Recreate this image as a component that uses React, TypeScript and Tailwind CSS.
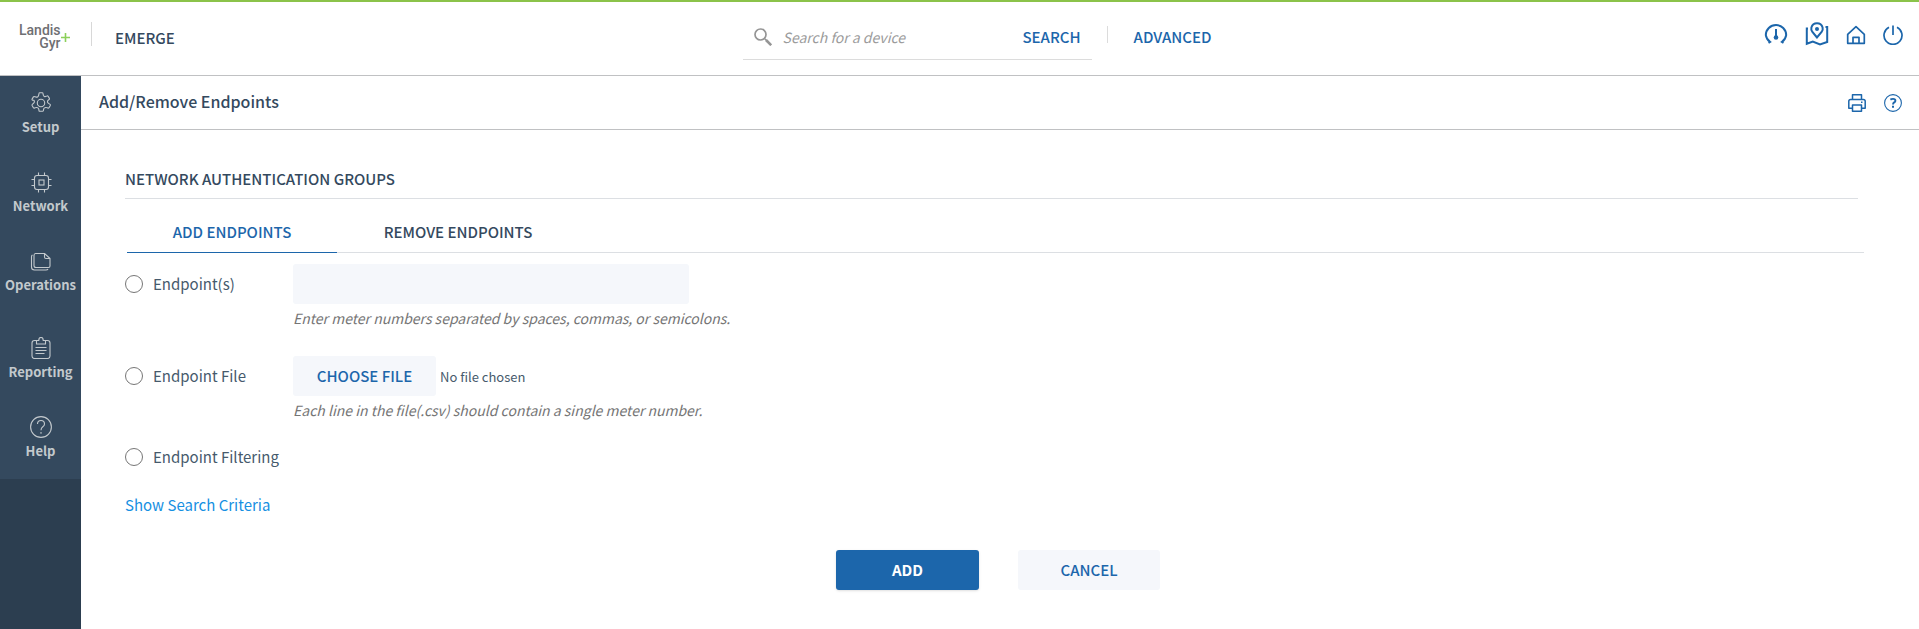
import { useState, type ReactNode } from "react";

type IconProps = { className?: string };

function GearIcon() {
  return (
    <svg viewBox="0 0 22 22" className="size-[22px]" fill="none" stroke="currentColor" strokeWidth="1.1" strokeLinejoin="round" aria-hidden="true">
      <path d="M8.7 3.2 9 1.4Q9.1.7 9.8.7h2.4q.7 0 .8.7l.3 1.800q.2.9 1.100 1.200.8.400 1.600-.100l1-.400q.7-.300 1.100.300l1.300 2.200q.3.600-.2 1l-1 .8q-.7.600-.7 1.400 0 1 .7 1.500l1.900 1.300q.5.400.2 1l-1.300 2.300q-.4.600-1.100.400l-1.500-.500q-.8-.3-1.600.1-.9.400-1.100 1.200l-.3 1.700q-.2.700-.8.700H9.800q-.7 0-.8-.700l-.3-1.700q-.2-.8-1.100-1.200-.8-.400-1.600-.1l-1.500.5q-.7.200-1.100-.400l-1.300-2.300q-.3-.600.2-1l1.400-1.300q.7-.5.700-1.500 0-.800-.7-1.400L2.300 8.100q-.5-.400-.2-1l1.300-2.200q.4-.600 1.100-.3l1.500.400q.8.300 1.600-.100.9-.400 1.100-1.700Z" />
      <circle cx="11" cy="11" r="3.700" />
    </svg>
  );
}

function ChipIcon() {
  return (
    <svg viewBox="0 0 22 22" className="size-[22px]" fill="none" stroke="currentColor" strokeWidth="1.1" aria-hidden="true">
      <rect x="4.500" y="4.500" width="14" height="14" rx="2.500" />
      <rect x="9" y="9" width="5" height="5" />
      <path d="M8.500 4.500v-3M14.500 4.500v-3M8.500 21.500v-3M14.500 21.500v-3M4.500 8.500h-3M4.500 14.500h-3M21.500 8.500h-3M21.500 14.500h-3" />
    </svg>
  );
}

function PagesIcon() {
  return (
    <svg viewBox="0 0 22 22" className="size-[22px]" fill="none" stroke="currentColor" strokeWidth="1.1" strokeLinejoin="round" aria-hidden="true">
      <path d="M5.500 3.500h9l5.500 5v7.500q0 1.500-1.500 1.500h-12.500q-2 0-2-2v-10q0-2 1.500-2ZM14.500 3.500v3.500q0 1.500 1.500 1.500h4" />
      <path d="M2.500 5q-1 .4-1 1.800v10.200q0 3 3 3h11.500q1.500 0 2-1" />
    </svg>
  );
}

function ClipboardIcon() {
  return (
    <svg viewBox="0 0 22 22" className="size-[22px]" fill="none" stroke="currentColor" strokeWidth="1.1" strokeLinejoin="round" aria-hidden="true">
      <path d="M7 3.500H4.500q-2.500 0-2.500 2.500v13q0 2.500 2.500 2.500h13q2.500 0 2.500-2.500V6q0-2.500-2.500-2.500H15" />
      <path d="M6.500 7V3.500h2.300q0-3 2.200-3t2.200 3h2.300V7Z" />
      <path d="M5.500 10.500h11M5.500 13.500h11M5.500 16.500h9" />
    </svg>
  );
}

function HelpIcon() {
  return (
    <svg viewBox="0 0 22 22" className="size-[22px]" fill="none" stroke="currentColor" strokeWidth="1.1" aria-hidden="true">
      <circle cx="11" cy="11" r="10.400" />
      <path d="M7.500 8q0-3.500 3.500-3.500T14.500 8q0 1.500-1.700 2.700Q11 12 11 14.200M11 15.900v1.800" />
    </svg>
  );
}

function GaugeIcon({ className }: IconProps) {
  return (
    <svg viewBox="0 0 24 20" className={className} fill="none" stroke="currentColor" strokeWidth="2" aria-hidden="true">
      <path d="M4.500 18.800 6 17.900A10.200 10.200 0 0 1 1.800 11.200 10.200 10.200 0 0 1 22.200 11.200 10.200 10.200 0 0 1 18 17.900l1.500.9" />
      <path d="M12 5v8" />
      <circle cx="12" cy="13.500" r="2.300" fill="currentColor" stroke="none" />
    </svg>
  );
}

function MapIcon({ className }: IconProps) {
  return (
    <svg viewBox="0 0 24 24" className={className} fill="none" stroke="currentColor" strokeWidth="2" aria-hidden="true">
      <path d="M3 6.500H1.800V21.800l6-2.300 7.200 3 7.200-2.500V5H20.500" />
      <path d="M12 15.500 7.400 10Q5.800 7.800 6.400 5.400 7.600 1.200 12 1.200t5.600 4.200q.6 2.400-1 4.600Z" />
      <circle cx="12" cy="7" r="2" fill="currentColor" stroke="none" />
    </svg>
  );
}

function HomeIcon({ className }: IconProps) {
  return (
    <svg viewBox="0 0 20 20" className={className} fill="none" stroke="currentColor" strokeWidth="1.700" strokeLinejoin="round" aria-hidden="true">
      <path d="M1.700 9.300 10 1.700l8.300 7.600v9H1.700Z" />
      <path d="M7 18.300v-6h6v6" />
    </svg>
  );
}

function PowerIcon({ className }: IconProps) {
  return (
    <svg viewBox="0 0 20 20" className={className} fill="none" stroke="currentColor" strokeWidth="1.700" aria-hidden="true">
      <path d="M6 2.300A9 9 0 1 0 14 2.300M10 .5v9.500" />
    </svg>
  );
}

function PrinterIcon({ className }: IconProps) {
  return (
    <svg viewBox="0 0 18 18" className={className} fill="none" stroke="currentColor" strokeWidth="1.500" strokeLinejoin="round" aria-hidden="true">
      <path d="M4.500 5.500V.8h9v4.700M4.500 14.300H.8v-7q0-1.800 1.800-1.800h12.800q1.800 0 1.800 1.800v7h-3.700" />
      <path d="M4.500 11h9v6.200h-9ZM13 8.200h1.500" />
    </svg>
  );
}

function HelpBlueIcon({ className }: IconProps) {
  return (
    <svg viewBox="0 0 18 18" className={className} fill="none" stroke="currentColor" aria-hidden="true">
      <circle cx="9" cy="9" r="8.400" strokeWidth="1.100" />
      <path d="M6.400 5.600Q7.400 4.900 9 4.900q2.400 0 2.400 1.800 0 1-1.200 1.700Q9 9.200 9 10.600" strokeWidth="1.900" />
      <path d="M9 11.800v2" strokeWidth="2" />
    </svg>
  );
}

function SearchIcon() {
  return (
    <svg viewBox="0 0 18 18" className="size-[18px] shrink-0 text-[#959595]" fill="none" stroke="currentColor" aria-hidden="true">
      <circle cx="6.500" cy="6.500" r="5.500" strokeWidth="1.700" />
      <path d="m10.500 10.500 1.800 1.800" strokeWidth="1.500" />
      <path d="m12 12 5.200 5.200" strokeWidth="2.600" />
    </svg>
  );
}

function Logo() {
  return (
    <a href="#" aria-label="Landis+Gyr" className="flex w-[51px] items-center font-['Roboto',sans-serif] text-sm leading-[13px] font-medium text-[#6f7073]">
      <span className="flex flex-col items-end">
        <span>Landis</span>
        <span>Gyr</span>
      </span>
      <svg viewBox="0 0 9 9" className="size-[9px] shrink-0 text-[#8cd05a]" stroke="currentColor" strokeWidth="1.600" aria-hidden="true">
        <path d="M4.500 0v9M0 4.500h9" />
      </svg>
    </a>
  );
}

function NavItem({ icon, label, className = "" }: { icon: ReactNode; label: string; className?: string }) {
  return (
    <a href="#" className={`flex h-[79px] flex-col items-center gap-[5px] pt-4 text-[#c3c9cd] ${className}`}>
      {icon}
      <span className="text-[13px] leading-4 font-bold">{label}</span>
    </a>
  );
}

type Choice = "endpoints" | "file" | "filtering";

function RadioOption({ id, label, checked, onSelect }: { id: Choice; label: string; checked: boolean; onSelect: (id: Choice) => void }) {
  return (
    <div className="flex h-10 w-[168px] shrink-0 items-center gap-[10px]">
      <input
        type="radio"
        id={id}
        name="source"
        checked={checked}
        onChange={() => onSelect(id)}
        className="size-[18px] shrink-0 appearance-none rounded-full border border-[#767676] bg-white checked:border-[5px] checked:border-[#1c66ab]"
      />
      <label htmlFor={id} className="whitespace-nowrap">{label}</label>
    </div>
  );
}

export default function App() {
  const [choice, setChoice] = useState<Choice | null>(null);
  const [tab, setTab] = useState<"add" | "remove">("add");
  const tabBase = "-mb-px h-[38px] w-[210px] border-b pb-1 font-medium";

  return (
    <div className="flex min-h-screen flex-col bg-white font-['Noto_Sans_CJK_SC',sans-serif] text-[15px] leading-5 text-[#465a6c]">
      <header className="grid h-[76px] grid-cols-[1fr_auto_1fr] border-t-2 border-b border-t-[#8bc34a] border-b-[#c0c1c3]">
        <div className="flex items-start pt-5 pl-[19px]">
          <div className="pt-[2px]"><Logo /></div>
          <div className="ml-[21px] h-6 w-px bg-[#d8d8d8]" />
          <span className="ml-[23px] pt-[6px] font-medium text-[#34495e]">EMERGE</span>
        </div>
        <div className="flex items-start pl-[35px] font-medium text-[#1c66ab]">
          <form className="flex h-[58px] w-[349px] items-center gap-[11px] border-b border-[#dcdcdc] px-[11px] pt-4 pb-1" onSubmit={(e) => e.preventDefault()}>
            <SearchIcon />
            <input type="search" aria-label="Search for a device" placeholder="Search for a device" className="min-w-0 flex-1 text-sm font-normal text-[#555] italic outline-none placeholder:text-[#9b9b9b]" />
            <button type="submit">SEARCH</button>
          </form>
          <div className="mt-6 ml-[15px] h-[17px] w-px bg-[#dcdcdc]" />
          <a href="#" className="mt-[25px] ml-[26px]">ADVANCED</a>
        </div>
        <nav aria-label="Shortcuts" className="flex items-start justify-end gap-[17px] pt-5 pr-4 text-[#1c66ab]">
          <a href="#" aria-label="Dashboard" className="pt-[2px]"><GaugeIcon className="h-5 w-6" /></a>
          <a href="#" aria-label="Map"><MapIcon className="size-6" /></a>
          <a href="#" aria-label="Home" className="pt-[3px]"><HomeIcon className="size-5" /></a>
          <a href="#" aria-label="Log out" className="pt-[3px]"><PowerIcon className="size-5" /></a>
        </nav>
      </header>

      <div className="flex flex-1">
        <nav aria-label="Main" className="w-[81px] shrink-0 bg-[#2c3e50]">
          <div className="bg-[#34495e]">
            <NavItem icon={<GearIcon />} label="Setup" />
            <NavItem icon={<ChipIcon />} label="Network" />
            <NavItem icon={<PagesIcon />} label="Operations" />
            <NavItem icon={<ClipboardIcon />} label="Reporting" className="mt-2" />
            <NavItem icon={<HelpIcon />} label="Help" />
          </div>
        </nav>

        <main className="min-w-0 flex-1">
          <div className="flex h-[54px] items-center justify-between border-b border-[#c0c1c3] pr-[17px] pl-[18px]">
            <h1 className="pb-[3px] text-base font-medium text-[#34495e]">Add/Remove Endpoints</h1>
            <div className="flex gap-[18px] text-[#1c66ab]">
              <button type="button" aria-label="Print"><PrinterIcon className="size-[18px]" /></button>
              <button type="button" aria-label="Help"><HelpBlueIcon className="size-[18px]" /></button>
            </div>
          </div>

          <div className="pt-[39px] pr-12 pb-9 pl-11">
            <h2 className="mr-[13px] border-b border-[#dcdfe3] pb-[9px] font-medium text-[#34495e]">NETWORK AUTHENTICATION GROUPS</h2>

            <div role="tablist" className="mt-4 mr-[7px] ml-[2px] flex border-b border-[#dcdfe3]">
              <button type="button" role="tab" aria-selected={tab === "add"} onClick={() => setTab("add")} className={`${tabBase} ${tab === "add" ? "border-[#1c66ab] text-[#1c66ab]" : "border-transparent text-[#34495e]"}`}>ADD ENDPOINTS</button>
              <button type="button" role="tab" aria-selected={tab === "remove"} onClick={() => setTab("remove")} className={`${tabBase} ml-4 ${tab === "remove" ? "border-[#1c66ab] text-[#1c66ab]" : "border-transparent text-[#34495e]"}`}>REMOVE ENDPOINTS</button>
            </div>

            <div className="mt-[11px] flex">
              <RadioOption id="endpoints" label="Endpoint(s)" checked={choice === "endpoints"} onSelect={setChoice} />
              <div>
                <input type="text" aria-label="Endpoint(s)" className="block h-10 w-[396px] rounded-[3px] bg-[#f5f7fb] px-3 outline-none" />
                <p className="mt-1 text-sm leading-5 text-[#757575] italic">Enter meter numbers separated by spaces, commas, or semicolons.</p>
              </div>
            </div>

            <div className="mt-7 flex">
              <RadioOption id="file" label="Endpoint File" checked={choice === "file"} onSelect={setChoice} />
              <div>
                <input type="file" aria-label="Endpoint File" className="block h-10 w-[396px] text-[13px] file:mr-1 file:h-10 file:w-[143px] file:rounded-[3px] file:bg-[#f5f7fb] file:text-[15px] file:font-medium file:text-[#1c66ab] file:uppercase" />
                <p className="mt-1 text-sm leading-5 text-[#757575] italic">Each line in the file(.csv) should contain a single meter number.</p>
              </div>
            </div>

            <div className="mt-[17px]">
              <RadioOption id="filtering" label="Endpoint Filtering" checked={choice === "filtering"} onSelect={setChoice} />
            </div>

            <a href="#" className="mt-[18px] block w-fit text-[#1690e2]">Show Search Criteria</a>

            <div className="mt-[35px] flex justify-center gap-[39px]">
              <button type="button" className="h-10 w-[143px] rounded-[3px] bg-[#1c66ab] font-bold text-white shadow-sm">ADD</button>
              <button type="button" className="h-10 w-[142px] rounded-[3px] bg-[#f5f7fb] font-medium text-[#1c66ab]">CANCEL</button>
            </div>
          </div>
        </main>
      </div>
    </div>
  );
}
